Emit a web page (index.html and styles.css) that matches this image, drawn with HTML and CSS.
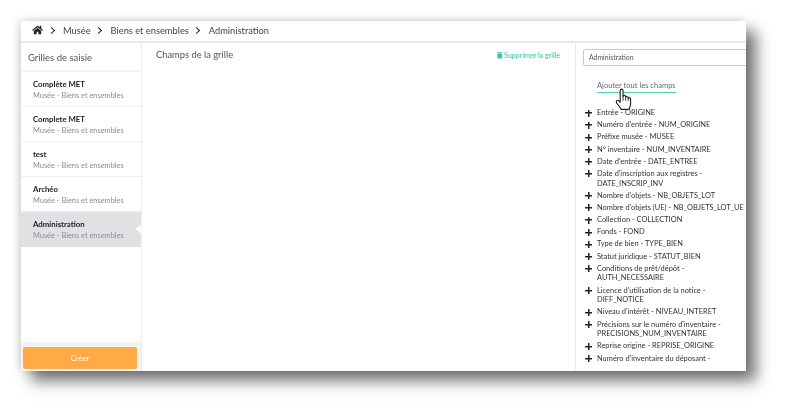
FILE: index.html
```html
<!DOCTYPE html>
<html lang="fr">
<head>
<meta charset="utf-8">
<title>Administration</title>
<link rel="stylesheet" href="styles.css">
</head>
<body>
<div class="app">
  <header class="crumbs">
    <svg class="home" viewBox="0 0 576 512"><path d="M280 148 96 300v164c0 9 7 16 16 16l112-.3c9 0 16-7 16-16V368c0-9 7-16 16-16h64c9 0 16 7 16 16v95.600c0 9 7 16 16 16l112 .4c9 0 16-7 16-16V300L296 148c-4.500-3.500-11.500-3.500-16 0zM572 251l-84-69V44c0-7-5-12-12-12h-56c-7 0-12 5-12 12v72l-89-74c-18-14-43-14-61 0L4 251c-5 4-6 12-2 17l26 31c4 5 12 6 17 2L280 107c4.500-3.500 11.500-3.500 16 0l235 194c5 4 13 3 17-2l26-31c4-5 3-13-2-17z"/></svg>
    <span class="sep"></span><span>Musée</span>
    <span class="sep"></span><span>Biens et ensembles</span>
    <span class="sep"></span><span>Administration</span>
  </header>
  <div class="columns">
    <aside class="side">
      <h2 class="side-title">Grilles de saisie</h2>
      <ul class="grids">
        <li class="grid"><b>Complète MET</b><span>Musée - Biens et ensembles</span></li>
        <li class="grid"><b>Complete MET</b><span>Musée - Biens et ensembles</span></li>
        <li class="grid"><b>test</b><span>Musée - Biens et ensembles</span></li>
        <li class="grid"><b>Archéo</b><span>Musée - Biens et ensembles</span></li>
        <li class="grid active"><b>Administration</b><span>Musée - Biens et ensembles</span></li>
      </ul>
      <div class="side-foot"><button class="create">Créer</button></div>
    </aside>
    <main class="main">
      <h1 class="main-title">Champs de la grille</h1>
      <a class="delete"><svg class="trash" viewBox="0 0 448 512"><path d="M32 464a48 48 0 0 0 48 48h288a48 48 0 0 0 48-48V128H32zM432 32H312l-9-19a24 24 0 0 0-22-13H167a24 24 0 0 0-22 13l-9 19H16A16 16 0 0 0 0 48v32a16 16 0 0 0 16 16h416a16 16 0 0 0 16-16V48a16 16 0 0 0-16-16z"/></svg>Supprimer la grille</a>
    </main>
    <section class="fields">
      <div class="name-input">Administration</div>
      <div class="add-all"><a class="add-link">Ajouter tout les champs</a></div>
      <ul class="field-list">
        <li>Entrée - ORIGINE</li>
        <li>Numéro d'entrée - NUM_ORIGINE</li>
        <li>Préfixe musée - MUSEE</li>
        <li>N° inventaire - NUM_INVENTAIRE</li>
        <li>Date d'entrée - DATE_ENTREE</li>
        <li>Date d'inscription aux registres - DATE_INSCRIP_INV</li>
        <li>Nombre d'objets - NB_OBJETS_LOT</li>
        <li class="one-line">Nombre d'objets (UE) - NB_OBJETS_LOT_UE</li>
        <li>Collection - COLLECTION</li>
        <li>Fonds - FOND</li>
        <li>Type de bien - TYPE_BIEN</li>
        <li>Statut juridique - STATUT_BIEN</li>
        <li>Conditions de prêt/dépôt - AUTH_NECESSAIRE</li>
        <li>Licence d'utilisation de la notice - DIFF_NOTICE</li>
        <li>Niveau d'intérêt - NIVEAU_INTERET</li>
        <li>Précisions sur le numéro d'inventaire - PRECISIONS_NUM_INVENTAIRE</li>
        <li>Reprise origine - REPRISE_ORIGINE</li>
        <li>Numéro d'inventaire du déposant -</li>
      </ul>
      <svg class="hand" viewBox="0 0 18 24"><path d="M5.500 2.500c0-2 3-2 3 0v6.500c0-1.800 2.800-1.800 2.800 0v1c0-1.600 2.700-1.600 2.700 .2v1c0-1.300 2.500-1.300 2.500 .5v4.800c0 2.500-1 3.500-1.500 6H6.500c-.5-2-4.500-6-5-7.500-.6-1.800 1.300-3 2.700-1.500l1.300 1.500z" fill="#fff" stroke="#222" stroke-width="1.200" stroke-linejoin="round"/><path d="M8.500 9v4.500M11.300 10v3.500M14 11v2.500" stroke="#222" stroke-width=".9" fill="none"/></svg>
    </section>
  </div>
</div>
</body>
</html>
```

FILE: styles.css
```css
* { box-sizing: border-box; }
html, body { margin: 0; padding: 0; height: 413px; overflow: hidden; background: #fff; }
body { padding: 21px 42px 0 21px; font-family: Lato, "Liberation Sans", sans-serif; color: #444; }
.app {
  width: 725px; height: 350px; background: #fff; display: flex; flex-direction: column;
  box-shadow: 10px 10px 14px rgba(0,0,0,.55), -3px 0 8px rgba(0,0,0,.12), 0 -3px 8px rgba(0,0,0,.06);
  filter: blur(.3px);
}
.crumbs {
  height: 21px; flex: none; display: flex; align-items: center; padding: 0 0 2px 11px;
  font-size: 9.300px; color: #444; border-bottom: 1px solid #e6e6e6; box-shadow: 0 1px 1px #eee;
}
.home { width: 11px; height: 10px; fill: #222; flex: none; }
.sep {
  width: 5px; height: 5px; flex: none; margin: 0 9.500px 0 5.500px; border-top: 1.800px solid #222; border-right: 1.800px solid #222;
  transform: rotate(45deg);
}
.columns { flex: 1; display: flex; min-height: 0; }
.side { width: 121px; flex: none; display: flex; flex-direction: column; border-right: 1px solid #eee; }
.side-title { margin: 0; height: 30px; padding: 9px 0 0 7px; font-size: 9.500px; font-weight: 400; color: #555; line-height: 13px; border-bottom: 2px solid #f3f3f3; }
.grids { margin: 0; padding: 0; list-style: none; flex: 1; }
.grid { height: 35px; padding: 7px 0 0 12px; border-bottom: 1px solid #eee; position: relative; display: flex; flex-direction: column; }
.grid b { font-size: 7.800px; line-height: 11px; color: #222; font-weight: 700; }
.grid span { font-size: 7.400px; line-height: 11px; color: #8b8b96; }
.active { background: #e1e1e5; border-bottom: 0; }
.active::after {
  content: ""; position: absolute; right: 0; top: 12px; border: 5px solid transparent; border-left: 0; border-right-color: #fff;
}
.side-foot { height: 29px; flex: none; background: #f3f3f3; padding: 5px 4px 2px 2px; }
.create { display: block; width: 100%; height: 22px; border: 0; border-radius: 2px; background: #ffa947; color: #fff; font: 400 7.600px Lato, sans-serif; }
.main { flex: 1; display: flex; justify-content: space-between; align-items: flex-start; padding: 6px 15px 0 14px; border-right: 1px solid #e8e8e8; }
.main-title { margin: 0; font-size: 9.350px; font-weight: 400; color: #555; line-height: 13px; }
.delete { display: flex; align-items: center; gap: 2px; font-size: 7.100px; line-height: 15px; color: #30c7a2; }
.trash { width: 5.500px; height: 6.500px; fill: #30c7a2; }
.fields { width: 170px; flex: none; padding: 7px 0 0 7px; position: relative; overflow: hidden; }
.name-input { width: 180px; height: 17px; border: 1px solid #c9c9c9; border-radius: 2px; padding-left: 5px; font-size: 6.900px; line-height: 15px; color: #555; }
.add-all { padding: 4px 0 0 14px; height: 42px; }
.add-all .add-link { margin-top: 10px; }
.add-link { display: inline-block; font-size: 7.550px; line-height: 11px; height: 13px; color: #6a6a78; border-bottom: 1px solid #55cdb0; }
.field-list { margin: 0; padding: 0; list-style: none; }
.field-list li { position: relative; padding: 0 5px 0 14px; font-size: 7.450px; line-height: 9.600px; margin-bottom: 2.600px; color: #333; }
.field-list .one-line { white-space: nowrap; }
.field-list li::before {
  content: ""; position: absolute; left: 2px; top: 1.500px; width: 7px; height: 7px;
  background: linear-gradient(#222,#222) center/7px 1.500px no-repeat, linear-gradient(#222,#222) center/1.500px 7px no-repeat;
}
.hand { position: absolute; left: 39px; top: 46px; width: 17px; height: 23px; }
```
